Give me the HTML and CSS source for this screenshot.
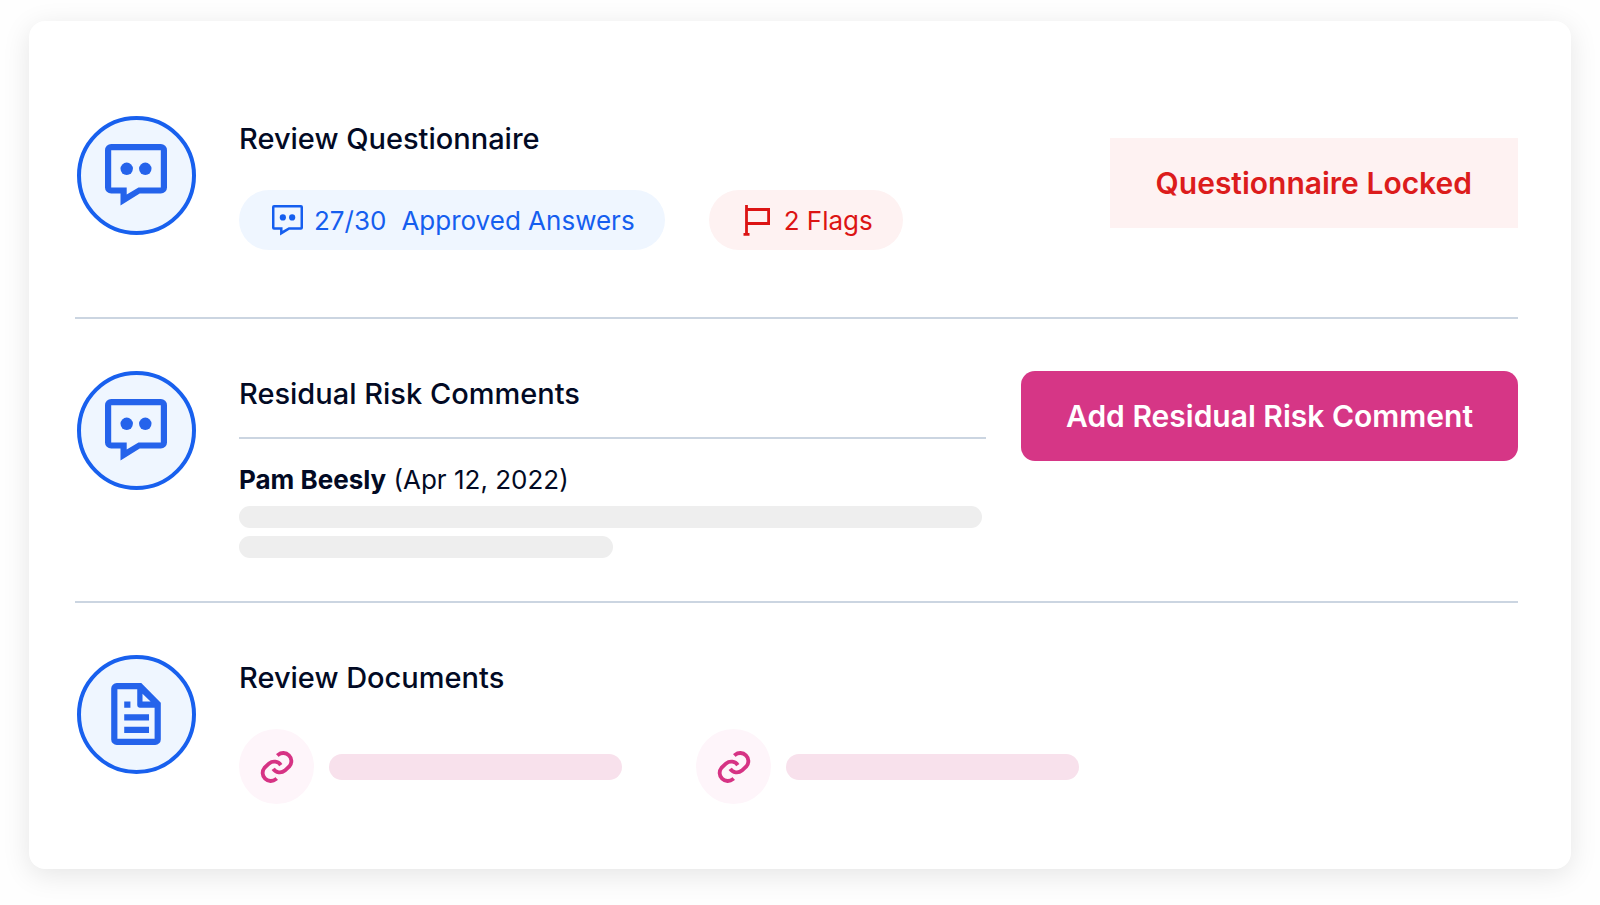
FILE: index.html
```html
<!DOCTYPE html>
<html lang="en">
<head>
  <meta charset="UTF-8" />
  <meta name="viewport" content="width=device-width, initial-scale=1.0" />
  <title>Vendor Review</title>
  <link rel="stylesheet" href="styles.css">
</head>
<body>
  <main class="card">
    <section class="row">
      <div class="badge">
        <svg class="icon-chat" viewBox="0 0 20 20" fill="currentColor" aria-hidden="true">
          <path fill-rule="evenodd" d="M2 0H18A2 2 0 0 1 20 2V14A2 2 0 0 1 18 16H11.2L5 19.8V16H2A2 2 0 0 1 0 14V2A2 2 0 0 1 2 0ZM2 2V14H7V16.3L10.8 14H18V2Z"/>
          <circle cx="7" cy="8" r="2"/>
          <circle cx="13" cy="8" r="2"/>
        </svg>
      </div>
      <div class="content">
        <h2>Review Questionnaire</h2>
        <div class="pills">
          <span class="pill pill-blue">
            <svg class="icon-small" viewBox="0 0 20 20" fill="currentColor" aria-hidden="true">
              <path fill-rule="evenodd" d="M1.3 0H18.7A1.3 1.3 0 0 1 20 1.3V14.7A1.3 1.3 0 0 1 18.7 16H11.2L5.2 19.6V16H1.3A1.3 1.3 0 0 1 0 14.7V1.3A1.3 1.3 0 0 1 1.3 0ZM1.6 1.6V14.4H6.8V16.6L10.8 14.4H18.4V1.6Z"/>
              <circle cx="7" cy="8" r="2"/>
              <circle cx="13" cy="8" r="2"/>
            </svg>
            <span>27/30</span>
            <span class="pill-label">Approved Answers</span>
          </span>
          <span class="pill pill-red">
            <svg class="icon-small" viewBox="0 0 31 31" fill="none" stroke="currentColor" stroke-width="2.8" aria-hidden="true">
              <path d="M4.5 0V30M1.5 29.4H7.5M4.5 4.5H26.6V18.5H4.5"/>
            </svg>
            <span>2 Flags</span>
          </span>
        </div>
      </div>
      <div class="status">Questionnaire Locked</div>
    </section>

    <section class="row">
      <div class="badge">
        <svg class="icon-chat" viewBox="0 0 20 20" fill="currentColor" aria-hidden="true">
          <path fill-rule="evenodd" d="M2 0H18A2 2 0 0 1 20 2V14A2 2 0 0 1 18 16H11.2L5 19.8V16H2A2 2 0 0 1 0 14V2A2 2 0 0 1 2 0ZM2 2V14H7V16.3L10.8 14H18V2Z"/>
          <circle cx="7" cy="8" r="2"/>
          <circle cx="13" cy="8" r="2"/>
        </svg>
      </div>
      <div class="content">
        <h2>Residual Risk Comments</h2>
        <div class="comment">
          <p><strong>Pam Beesly</strong> (Apr 12, 2022)</p>
          <div class="line"></div>
          <div class="line line-half"></div>
        </div>
      </div>
      <button type="button" class="add-btn">Add Residual Risk Comment</button>
    </section>

    <section class="row">
      <div class="badge">
        <svg class="icon-doc" viewBox="0 0 16 20" fill="currentColor" aria-hidden="true">
          <path fill-rule="evenodd" d="M1.8 0H9.7L16 6.4V18.2A1.8 1.8 0 0 1 14.2 20H1.8A1.8 1.8 0 0 1 0 18.2V1.8A1.8 1.8 0 0 1 1.8 0ZM2 2V18H14V8H9.2A.8 .8 0 0 1 8.4 7.2V2ZM10.1 3.5V6H12.7Z"/>
          <path d="M4.2 6H6.2V8H4.2ZM4.2 10.1H12.2V12.1H4.2ZM4.2 14.1H12.2V16.1H4.2Z"/>
        </svg>
      </div>
      <div class="content">
        <h2>Review Documents</h2>
        <div class="docs">
          <div class="doc">
            <a href="#" class="doc-link" aria-label="Open first document">
              <svg class="icon-link" viewBox="0 0 32 32" fill="none" stroke="currentColor" stroke-width="3.6" aria-hidden="true">
                <path d="M16.4 5.2L17 4.6A7.6 7.6 0 0 1 27.8 15.2L23.4 19.4A7.6 7.6 0 0 1 12.4 17.8"/>
                <path d="M15.6 26.8L15 27.4A7.6 7.6 0 0 1 4.2 16.8L8.6 12.6A7.6 7.6 0 0 1 19.6 14.2"/>
              </svg>
            </a>
            <div class="doc-line"></div>
          </div>
          <div class="doc">
            <a href="#" class="doc-link" aria-label="Open second document">
              <svg class="icon-link" viewBox="0 0 32 32" fill="none" stroke="currentColor" stroke-width="3.6" aria-hidden="true">
                <path d="M16.4 5.2L17 4.6A7.6 7.6 0 0 1 27.8 15.2L23.4 19.4A7.6 7.6 0 0 1 12.4 17.8"/>
                <path d="M15.6 26.8L15 27.4A7.6 7.6 0 0 1 4.2 16.8L8.6 12.6A7.6 7.6 0 0 1 19.6 14.2"/>
              </svg>
            </a>
            <div class="doc-line"></div>
          </div>
        </div>
      </div>
    </section>
  </main>
</body>
</html>
```
FILE: styles.css
```css
* {
  box-sizing: border-box;
}
body {
  font-family: Inter, "Liberation Sans", sans-serif;
  margin: 0;
  padding: 21px 29px 36px;
  background: #fefefe;
  color: #020a24;
}
.card {
  padding: 42px 53px 12px 46px;
  background: white;
  border-radius: 16px;
  box-shadow: 0 6px 28px rgba(0,0,0,0.1);
}
.row {
  display: flex;
  align-items: flex-start;
  padding: 52px 0 43px;
}
.row:first-child {
  padding: 53px 0 67px;
}
.row + .row {
  border-top: 2px solid #cbd5e1;
}
.row:last-child {
  padding-bottom: 53px;
}
.badge {
  display: flex;
  align-items: center;
  justify-content: center;
  flex: none;
  width: 119px;
  height: 119px;
  margin: 0 43px 0 2px;
  padding: 0 1px 1px 0;
  border: 4px solid #1860ee;
  border-radius: 50%;
  background: #eff6ff;
  color: #2563eb;
}
.icon-chat {
  width: 62px;
  height: 62px;
}
.icon-doc {
  width: 50px;
  height: 62px;
}
.content {
  flex: 1;
}
h2 {
  margin: 0;
  font-size: 29px;
  line-height: 46px;
  font-weight: 500;
}
.pills {
  display: flex;
  gap: 44px;
  margin-top: 28px;
}
.pill {
  display: flex;
  align-items: center;
  height: 60px;
  padding: 0 30px 0 33px;
  border-radius: 30px;
  font-size: 26px;
  font-weight: 400;
}
.pill-blue {
  background: #eff6ff;
  color: #155eef;
}
.pill-red {
  background: #fef2f2;
  color: #dc1414;
}
.pill-label {
  margin-left: 15px;
}
.icon-small {
  width: 31px;
  height: 31px;
  margin-right: 11px;
}
.status {
  align-self: center;
  padding: 0 46px;
  background: #fef2f2;
  color: #dc1c1c;
  font-size: 30px;
  line-height: 90px;
  font-weight: 600;
}
.comment {
  margin-top: 20px;
  padding-top: 23px;
  border-top: 2px solid #cbd5e1;
}
.comment p {
  margin: 0 0 8px;
  font-size: 26px;
  line-height: 36px;
  font-weight: 400;
}
.comment strong {
  font-weight: 700;
}
.line {
  height: 22px;
  margin-right: 4px;
  border-radius: 11px;
  background: #eeeeee;
}
.line-half {
  width: 50%;
  margin-top: 8px;
}
.add-btn {
  margin-left: 35px;
  padding: 0 45px;
  border: none;
  border-radius: 14px;
  background: #d63686;
  color: white;
  font-family: inherit;
  font-size: 30px;
  line-height: 90px;
  font-weight: 600;
  cursor: pointer;
}
.docs {
  display: flex;
  gap: 74px;
  margin-top: 28px;
}
.doc {
  display: flex;
  align-items: center;
  gap: 15px;
}
.doc-link {
  display: flex;
  align-items: center;
  justify-content: center;
  width: 75px;
  height: 75px;
  border-radius: 50%;
  background: #fef5fa;
  color: #d63384;
}
.icon-link {
  width: 34px;
  height: 34px;
}
.doc-line {
  width: 293px;
  height: 26px;
  border-radius: 13px;
  background: #f8e1ec;
}
```
